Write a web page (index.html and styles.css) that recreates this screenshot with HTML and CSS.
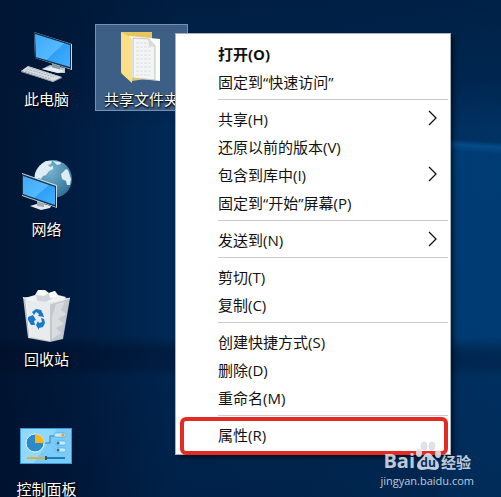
FILE: index.html
```
<!DOCTYPE html>
<html lang="zh-CN">
<head>
    <meta charset="UTF-8">
    <title>桌面</title>
    <link rel="stylesheet" href="styles.css">
</head>
<body>
<main class="desktop">
    <div class="icons">
        <a class="icon" href="#">
            <svg width="61" height="60" viewBox="0 0 61 60">
                <defs>
                    <linearGradient id="screen" x1="0" y1="0" x2="1" y2="1">
                        <stop offset="0" stop-color="#3fa9f8"/>
                        <stop offset=".55" stop-color="#54b9ff"/>
                        <stop offset=".56" stop-color="#2d9ff6"/>
                        <stop offset="1" stop-color="#45b1ff"/>
                    </linearGradient>
                </defs>
                <path d="M26 41l8-4 15 3v5l-7 0z" fill="#b9c6d0"/>
                <path d="M36 34l8 3v5l-8-2z" fill="#8797a5"/>
                <path d="M26 41l9-2 14 4-7 2z" fill="#e9eef1"/>
                <path d="M18 4l38 12v26l-37-12z" fill="#c9d8e2"/>
                <path d="M18 4l37 12v25l-36-11z" fill="#17354f"/>
                <path d="M19 6l35 11v22L20 29z" fill="url(#screen)"/>
                <path d="M5 43l7-5 34 11-9 5z" fill="#d7dde1"/>
                <path d="M5 43l32 10 9-4v1l-9 4L5 44z" fill="#8f9da8"/>
                <path d="M9 43l26 8M11 41l27 8M13 39l28 9" stroke="#a3afb9" stroke-dasharray="2 1" fill="none"/>
            </svg>
            <span class="label">此电脑</span>
        </a>
        <a class="icon selected" href="#">
            <svg width="61" height="60" viewBox="0 0 61 60">
                <path d="M10 4h31v46l-20 3z" fill="#e8c65f"/>
                <path d="M18 8l31 3v42l-28-3z" fill="#fdfdfb"/>
                <path d="M22 10l16 1 6 7v34l-22-2z" fill="#f3f4f4" stroke="#a7adb0" stroke-width=".7"/>
                <path d="M25 15h11M25 19h16M25 23h16M25 27h16M25 31h16M25 35h16M25 39h16M25 43h16M25 47h14" stroke="#d9dcde" stroke-dasharray="3 1"/>
                <path d="M37 11l1 7 6 1z" fill="#d9d9d7"/>
                <path d="M10 4l9 5q2 1 2 4v42l-10-9q-1-1-1-3z" fill="#fbdf86"/>
            </svg>
            <span class="label">共享文件夹</span>
        </a>
        <a class="icon" href="#">
            <svg width="61" height="60" viewBox="0 0 61 60">
                <defs>
                    <radialGradient id="globe" cx=".4" cy=".25" r=".8">
                        <stop offset="0" stop-color="#79b6d2"/>
                        <stop offset="1" stop-color="#2c6e93"/>
                    </radialGradient>
                </defs>
                <circle cx="37" cy="21" r="19" fill="url(#globe)"/>
                <path d="M19 16q3-9 11-13l6 0-1 3-3 1 2 2 3-1 0 3-4 2-3 4-3 1-2 3-3-1 1 4 4 2 2 4-4-2-6-5z" fill="#deedf3"/>
                <path d="M37 3l7 1 1 2-4 1zM50 11l2 1 3 9-1 6-3 0-1-4-4-2-1-5z" fill="#deedf3"/>
                <path d="M14 48l10-3 11 3-1 2-9 2z" fill="#e3e8eb"/>
                <path d="M21 42l7 2v5l-7-1z" fill="#9dabb5"/>
                <path d="M6 15l35 12v23L6 38z" fill="#c9d8e2"/>
                <path d="M6 16l34 12v21L6 37z" fill="#17354f"/>
                <path d="M7 18l32 11v18L7 36z" fill="url(#screen)"/>
            </svg>
            <span class="label">网络</span>
        </a>
        <span></span>
        <a class="icon" href="#">
            <svg width="61" height="60" viewBox="0 0 61 60">
                <path d="M7 9l47 1-7 41-13 3-22-4z" fill="#bcc3c9"/>
                <path d="M9 10l10-3 3-5 7 0 4 3 6-2 3 4 8 2-5 7-30 2z" fill="#f0f2f3"/>
                <path d="M20 7l8 1 5-3 4 5-7 4-9-1z" fill="#cfd5d9"/>
                <path d="M22 2l7 0 1 5-8 0zM33 5l6-2 1 6-6 1z" fill="#fff"/>
                <path d="M10 13l24 2v38l-20-4z" fill="#e9ecef"/>
                <path d="M34 15l18-3-6 38-12 3z" fill="#c3c9ce"/>
                <path d="M40 16l9-2-4 8 5 4-8 5 6 5-8 4 5 5-9 6V29z" fill="#d9dde0"/>
                <path d="M7 9l3 4 24 3 20-6" stroke="#e6eaee" fill="none"/>
                <path d="M10 13l4 37" stroke="#f8f8f8"/>
                <g fill="#1879c8">
                    <path d="M16 24l4-3 5 1 2 4 1 3-6-1 1-2-3-2-2 3z"/>
                    <path d="M12 29l5-2 3 5-2 1 1 4-4 0-3-5z"/>
                    <path d="M20 37l2-4 1 2 3-1-1-4 3 1 1 4-2 4-4 1 0 2z"/>
                </g>
            </svg>
            <span class="label">回收站</span>
        </a>
        <span></span>
        <a class="icon" href="#">
            <svg width="61" height="60" viewBox="0 0 61 60">
                <path d="M4 10h52v36H4z" fill="#3a9bdc"/>
                <path d="M5 11h50v34H5z" fill="#7acbf7"/>
                <path d="M5 11h36L18 45H5z" fill="#92d8fb"/>
                <circle cx="19" cy="25" r="9" fill="#2b8bc9" stroke="#e4f5ff"/>
                <path d="M19 25v-9a9 9 0 0 1 9 9z" fill="#fbb615"/>
                <path d="M29 25h5v-7h4" fill="none" stroke="#2d82b4"/>
                <g fill="#c5eafd" stroke="#3b96cb" stroke-width=".5">
                    <rect x="38" y="15" width="12" height="4" rx="2"/>
                    <rect x="39" y="23" width="11" height="4" rx="2"/>
                    <rect x="39" y="30" width="11" height="4" rx="2"/>
                </g>
                <circle cx="47" cy="17" r="1.6" fill="#f29b1d"/>
                <circle cx="42" cy="25" r="1.6" fill="#167ab8"/>
                <circle cx="42" cy="32" r="1.6" fill="#167ab8"/>
                <path d="M11 40h18" stroke="#e2ae3b" stroke-width="2"/>
                <path d="M31 40h18" stroke="#197db9" stroke-width="2"/>
                <path d="M30 38v4" stroke="#135e8e" stroke-width="2"/>
            </svg>
            <span class="label">控制面板</span>
        </a>
    </div>

    <ul class="menu">
        <li><button class="bold">打开(O)</button></li>
        <li><button>固定到“快速访问”</button></li>
        <li class="line"></li>
        <li><button class="sub">共享(H)<svg width="10" height="16" viewBox="0 0 10 16"><path d="M1 1l7 7-7 7"/></svg></button></li>
        <li><button>还原以前的版本(V)</button></li>
        <li><button class="sub">包含到库中(I)<svg width="10" height="16" viewBox="0 0 10 16"><path d="M1 1l7 7-7 7"/></svg></button></li>
        <li><button>固定到“开始”屏幕(P)</button></li>
        <li class="line"></li>
        <li><button class="sub">发送到(N)<svg width="10" height="16" viewBox="0 0 10 16"><path d="M1 1l7 7-7 7"/></svg></button></li>
        <li class="line"></li>
        <li><button>剪切(T)</button></li>
        <li><button>复制(C)</button></li>
        <li class="line"></li>
        <li><button>创建快捷方式(S)</button></li>
        <li><button>删除(D)</button></li>
        <li><button>重命名(M)</button></li>
        <li class="line"></li>
        <li class="marked"><button>属性(R)</button></li>
    </ul>

    <div class="watermark">
        <div class="brand">
            <span class="bai">Bai</span>
            <span class="paw">
                <svg width="26" height="30" viewBox="0 0 26 30">
                    <g stroke="#c9cdd3" stroke-width=".5">
                        <ellipse cx="9" cy="5" rx="3" ry="4"/>
                        <ellipse cx="17" cy="5" rx="3" ry="4"/>
                    </g>
                    <ellipse cx="4" cy="12" rx="3" ry="4"/>
                    <ellipse cx="23" cy="13" rx="3" ry="4"/>
                    <path d="M13 12q3 0 5 4l5 5q3 7-3 8-3 0-7-1-4 1-7 1-6-2-3-8l5-5q2-4 5-4z"/>
                </svg>
                <span class="du">du</span>
            </span>
            <span class="jy">经验</span>
        </div>
        <div class="url">jingyan.baidu.com</div>
    </div>
</main>
</body>
</html>
```
FILE: styles.css
```
* {
    box-sizing: border-box;
}
body {
    margin: 0;
    font-family: "Open Sans", "Noto Sans CJK SC", sans-serif;
    font-size: 15px;
}
.desktop {
    position: relative;
    height: 100vh;
    overflow: hidden;
    padding-top: 24px;
    background:
        linear-gradient(184deg, transparent 142px, rgba(10, 100, 175, .5) 147px, rgba(0, 80, 150, .35) 154px, rgba(0, 80, 150, .3) 340px, rgba(0, 80, 150, .1) 360px) right top / 60px 100% no-repeat,
        linear-gradient(to bottom, transparent 336px, rgba(0, 8, 30, .4) 350px, rgba(0, 8, 30, .35) 368px, rgba(0, 8, 30, .15) 376px, rgba(0, 8, 30, .25)),
        linear-gradient(to right, #001634 0, #001d42 80px, #002b58 180px, #002c5a 300px, #003263 100%);
}
.desktop::before {
    content: "";
    position: absolute;
    top: 0;
    left: 0;
    right: 0;
    height: 130px;
    background: linear-gradient(rgba(0, 22, 52, .6), rgba(0, 22, 52, .4) 80px, transparent);
}

/* desktop icons */
.icons {
    position: relative;
    display: grid;
    grid-template-columns: 93px 93px;
    gap: 43px 2px;
}
.icon {
    display: flex;
    flex-direction: column;
    align-items: center;
    padding-top: 3px;
    border: 1px solid transparent;
    color: #fff;
    text-decoration: none;
}
.icon svg {
    display: block;
}
.selected {
    background: #3d5f86;
    border-color: #7391b1;
}
.label {
    line-height: 22px;
    white-space: nowrap;
    text-shadow: 1px 1px 2px #000, 0 1px 2px #000;
}

/* context menu */
.menu {
    position: absolute;
    top: 33px;
    left: 175px;
    width: 276px;
    margin: 0;
    padding: 6px 0 5px;
    list-style: none;
    background: #fff;
    border: 1px solid #a9b2bc;
    box-shadow: 3px 3px 4px rgba(0, 0, 0, .5);
}
.menu button {
    display: flex;
    align-items: center;
    width: 100%;
    height: 28px;
    padding: 0 12px 2px 42px;
    border: 0;
    background: none;
    font: inherit;
    color: #111;
    text-align: left;
    white-space: nowrap;
}
.menu button:hover {
    background: #eee;
}
.menu .bold {
    font-weight: bold;
}
.menu .sub {
    justify-content: space-between;
}
.menu svg path {
    fill: none;
    stroke: #111;
    stroke-width: 1.3;
}
.line {
    height: 1px;
    margin: 3px 2px 5px 42px;
    background: #ccc;
}
.marked {
    position: relative;
}
.marked::after {
    content: "";
    position: absolute;
    top: -4px;
    right: 2px;
    bottom: -6px;
    left: 4px;
    border: 4px solid #e12b23;
    border-radius: 6px;
    pointer-events: none;
}

/* watermark */
.watermark {
    position: absolute;
    right: 27px;
    bottom: 8px;
    color: rgba(225, 232, 240, .85);
}
.brand {
    display: flex;
    align-items: flex-end;
    height: 30px;
    margin: 0 0 2px 3px;
}
.bai {
    font-size: 20px;
    font-weight: bold;
    line-height: 20px;
}
.paw {
    position: relative;
    height: 30px;
}
.paw svg {
    display: block;
    fill: #dbe1e9;
    opacity: .9;
}
.du {
    position: absolute;
    left: 0;
    right: 0;
    bottom: 2px;
    text-align: center;
    font-size: 12px;
    font-weight: bold;
    line-height: 12px;
    color: #0a2e58;
}
.jy {
    font-size: 15px;
    font-weight: bold;
    line-height: 18px;
}
.url {
    font-size: 11px;
    line-height: 16px;
}
```
